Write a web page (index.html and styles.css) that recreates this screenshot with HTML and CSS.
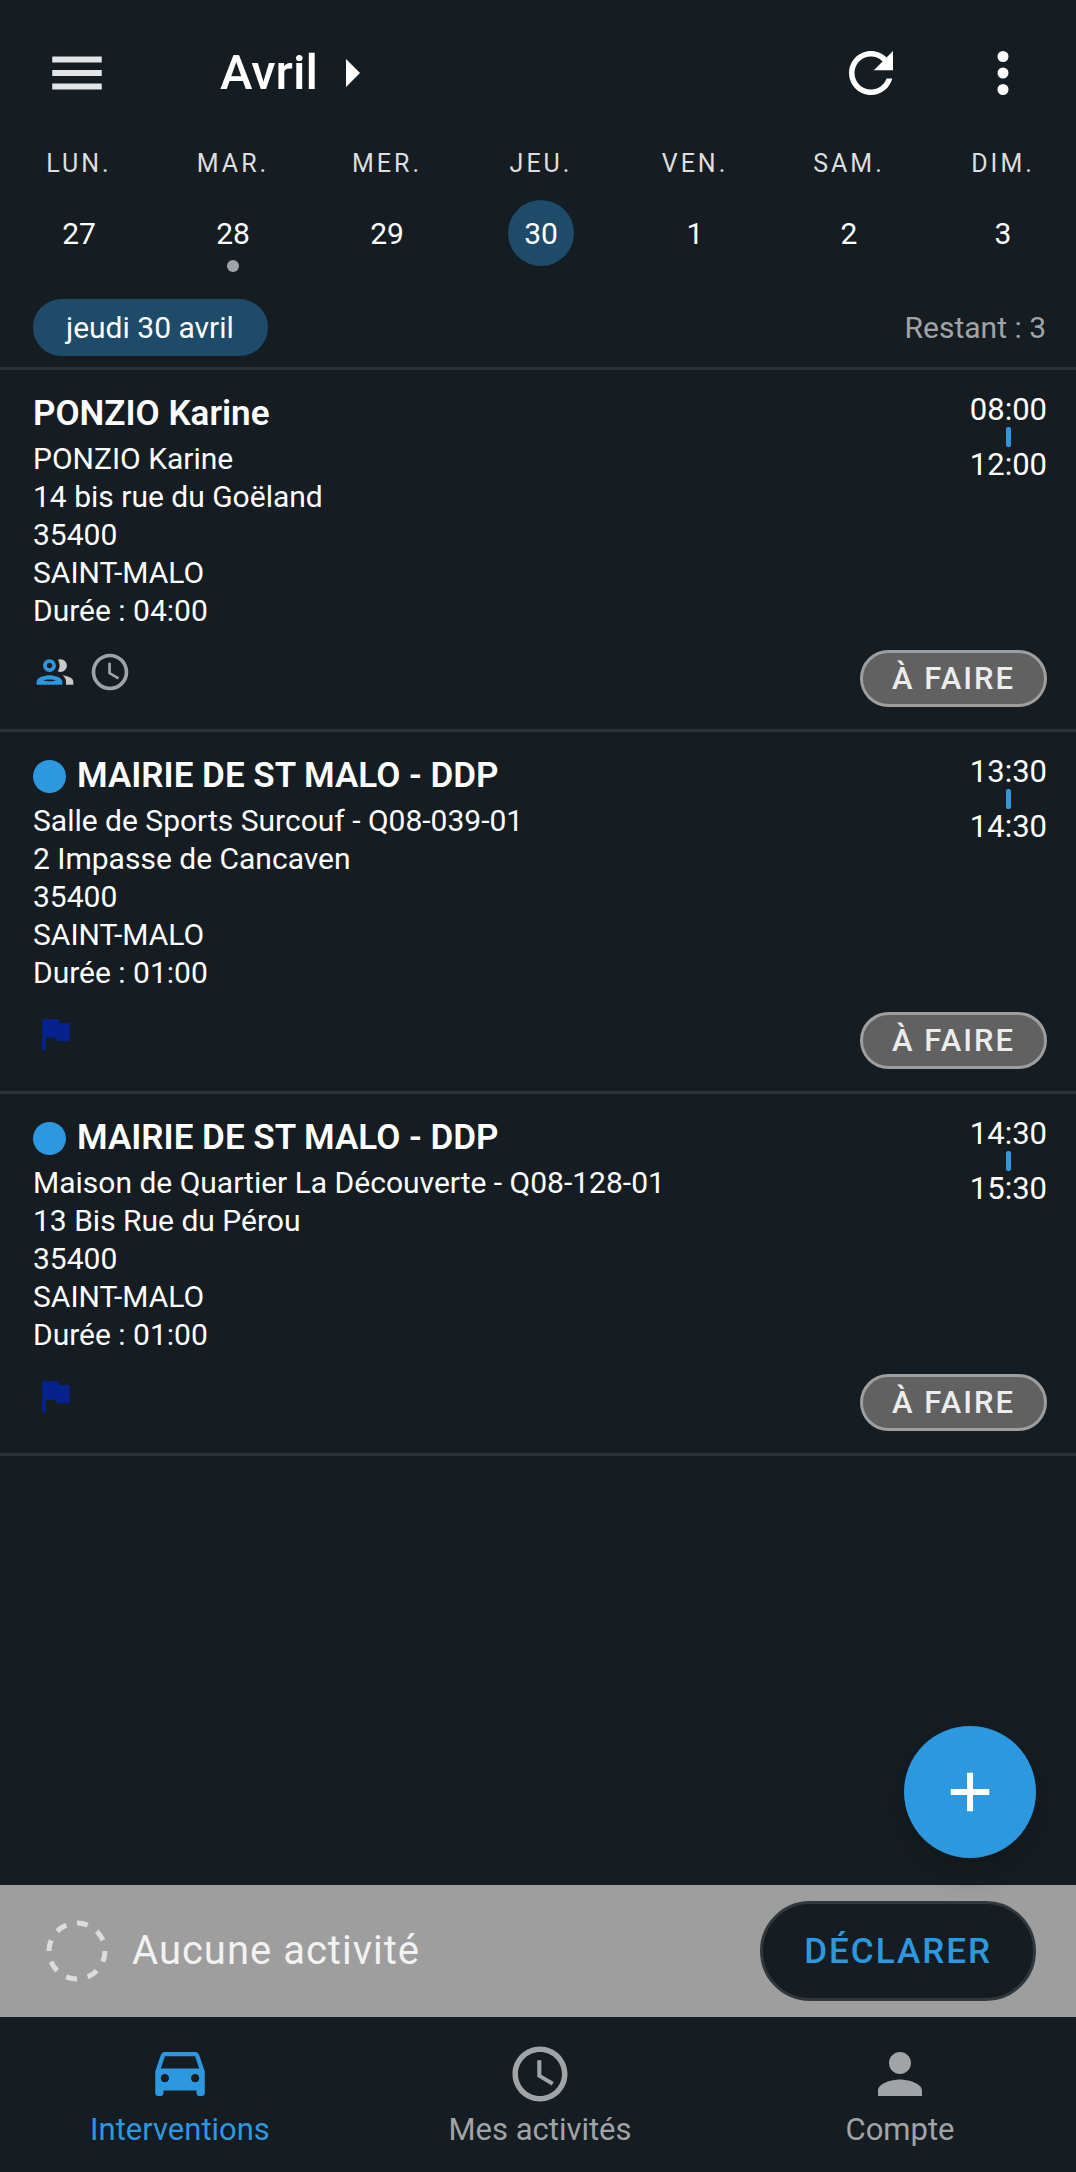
FILE: index.html
```html
<!DOCTYPE html>
<html lang="fr">
<head>
    <meta charset="UTF-8">
    <meta name="viewport" content="width=device-width, initial-scale=1.0">
    <title>Interventions</title>
    <link rel="stylesheet" href="styles.css">
</head>
<body>
    <header class="topbar">
        <button class="icon-button" aria-label="Menu">
            <svg class="icon menu-icon" viewBox="0 0 24 24"><path d="M3 18h18v-2.2H3zm0-4.9h18v-2.2H3zM3 6v2.2h18V6z"/></svg>
        </button>
        <button class="month">
            Avril
            <svg class="month-arrow" viewBox="0 0 5 10"><path d="M0 0l5 5-5 5z"/></svg>
        </button>
        <div class="actions">
            <button class="icon-button" aria-label="Actualiser">
                <svg class="icon" viewBox="0 0 24 24"><path d="M17.65 6.35C16.2 4.9 14.21 4 12 4c-4.42 0-7.99 3.58-7.99 8s3.57 8 7.99 8c3.73 0 6.84-2.55 7.73-6h-2.08c-.82 2.33-3.04 4-5.65 4-3.31 0-6-2.69-6-6s2.69-6 6-6c1.66 0 3.14.69 4.22 1.78L13 11h7V4l-2.35 2.35z"/></svg>
            </button>
            <button class="icon-button" aria-label="Plus d'options">
                <svg class="icon" viewBox="0 0 24 24"><circle cx="12" cy="6" r="2"/><circle cx="12" cy="12" r="2"/><circle cx="12" cy="18" r="2"/></svg>
            </button>
        </div>
    </header>

    <div class="week">
        <div class="day"><span class="day-name">LUN.</span><button class="day-number">27</button></div>
        <div class="day"><span class="day-name">MAR.</span><button class="day-number">28</button><span class="day-dot"></span></div>
        <div class="day"><span class="day-name">MER.</span><button class="day-number">29</button></div>
        <div class="day"><span class="day-name">JEU.</span><button class="day-number selected">30</button></div>
        <div class="day"><span class="day-name">VEN.</span><button class="day-number">1</button></div>
        <div class="day"><span class="day-name">SAM.</span><button class="day-number">2</button></div>
        <div class="day"><span class="day-name">DIM.</span><button class="day-number">3</button></div>
    </div>

    <div class="summary">
        <span class="date-chip">jeudi 30 avril</span>
        <span class="remaining">Restant : 3</span>
    </div>

    <main class="list">
        <article class="item">
            <div class="details">
                <h2>PONZIO Karine</h2>
                <p>PONZIO Karine</p>
                <p>14 bis rue du Goëland</p>
                <p>35400</p>
                <p>SAINT-MALO</p>
                <p>Durée : 04:00</p>
                <div class="tags">
                    <svg class="tag" viewBox="0 0 24 24">
                        <path class="person-front" d="M9 13.75c-2.34 0-7 1.17-7 3.5V19h14v-1.75c0-2.33-4.66-3.5-7-3.5zM5.6 16.6c.9-.4 2-.5 3.4-.5s2.5.1 3.4.5c-.9.3-2 .4-3.4.4s-2.500-.1-3.400-.4zM9 12c1.93 0 3.500-1.570 3.500-3.500S10.930 5 9 5 5.500 6.570 5.500 8.500 7.070 12 9 12zm0-5c.83 0 1.500.67 1.500 1.500S9.830 10 9 10s-1.500-.67-1.500-1.500S8.170 7 9 7z"/>
                        <path class="person-back" d="M16.04 13.81c1.16.84 1.96 1.96 1.96 3.44V19h4v-1.75c0-2.02-3.5-3.17-5.96-3.44zM15 12c1.93 0 3.5-1.57 3.5-3.5S16.93 5 15 5c-.54 0-1.04.13-1.5.35.63.89 1 1.98 1 3.15s-.37 2.26-1 3.15c.46.22.96.35 1.5.35z"/>
                    </svg>
                    <svg class="tag clock" viewBox="0 0 24 24"><path d="M12 2C6.48 2 2 6.48 2 12s4.48 10 10 10 10-4.48 10-10S17.52 2 12 2zm0 18c-4.42 0-8-3.58-8-8s3.58-8 8-8 8 3.58 8 8-3.58 8-8 8zm.5-13H11v6l5.25 3.15.75-1.23-4.5-2.67z"/></svg>
                </div>
            </div>
            <div class="side">
                <div class="times"><time>08:00</time><span class="time-bar"></span><time>12:00</time></div>
                <button class="status">À FAIRE</button>
            </div>
        </article>

        <article class="item">
            <div class="details">
                <h2><span class="bullet"></span>MAIRIE DE ST MALO - DDP</h2>
                <p>Salle de Sports Surcouf - Q08-039-01</p>
                <p>2 Impasse de Cancaven</p>
                <p>35400</p>
                <p>SAINT-MALO</p>
                <p>Durée : 01:00</p>
                <div class="tags">
                    <svg class="tag flag" viewBox="0 0 24 24"><path d="M14.4 6L14 4H5v17h2v-7h5.6l.4 2h7V6z"/></svg>
                </div>
            </div>
            <div class="side">
                <div class="times"><time>13:30</time><span class="time-bar"></span><time>14:30</time></div>
                <button class="status">À FAIRE</button>
            </div>
        </article>

        <article class="item">
            <div class="details">
                <h2><span class="bullet"></span>MAIRIE DE ST MALO - DDP</h2>
                <p>Maison de Quartier La Découverte - Q08-128-01</p>
                <p>13 Bis Rue du Pérou</p>
                <p>35400</p>
                <p>SAINT-MALO</p>
                <p>Durée : 01:00</p>
                <div class="tags">
                    <svg class="tag flag" viewBox="0 0 24 24"><path d="M14.4 6L14 4H5v17h2v-7h5.6l.4 2h7V6z"/></svg>
                </div>
            </div>
            <div class="side">
                <div class="times"><time>14:30</time><span class="time-bar"></span><time>15:30</time></div>
                <button class="status">À FAIRE</button>
            </div>
        </article>
    </main>

    <footer class="bottom">
        <button class="fab" aria-label="Ajouter">
            <svg class="icon" viewBox="0 0 24 24"><path d="M19 13.1h-5.9V19h-2.2v-5.9H5v-2.2h5.9V5h2.2v5.9H19z"/></svg>
        </button>
        <div class="activity">
            <svg class="ring" viewBox="0 0 62 62"><circle cx="31" cy="31" r="28" pathLength="16" transform="rotate(-90 31 31)"/></svg>
            <span class="activity-text">Aucune activité</span>
            <button class="declare">DÉCLARER</button>
        </div>
        <nav class="tabs">
            <a class="tab active" href="#interventions">
                <svg class="icon" viewBox="0 1 24 24"><path d="M18.92 6.01C18.72 5.42 18.16 5 17.5 5h-11c-.66 0-1.21.42-1.42 1.01L3 12v8c0 .55.45 1 1 1h1c.55 0 1-.45 1-1v-1h12v1c0 .55.45 1 1 1h1c.55 0 1-.45 1-1v-8l-2.08-5.99zM6.5 16c-.83 0-1.5-.67-1.5-1.5S5.67 13 6.5 13s1.5.67 1.5 1.5S7.33 16 6.5 16zm11 0c-.83 0-1.5-.67-1.5-1.5s.67-1.5 1.5-1.5 1.5.67 1.5 1.5-.67 1.5-1.5 1.5zM5 11l1.5-4.5h11L19 11H5z"/></svg>
                Interventions
            </a>
            <a class="tab" href="#activites">
                <svg class="icon" viewBox="0 0 24 24"><path d="M12 2C6.48 2 2 6.48 2 12s4.48 10 10 10 10-4.48 10-10S17.52 2 12 2zm0 18c-4.42 0-8-3.58-8-8s3.58-8 8-8 8 3.58 8 8-3.58 8-8 8zm.5-13H11v6l5.25 3.15.75-1.23-4.5-2.67z"/></svg>
                Mes activités
            </a>
            <a class="tab" href="#compte">
                <svg class="icon" viewBox="0 0 24 24"><path d="M12 12c2.21 0 4-1.79 4-4s-1.79-4-4-4-4 1.79-4 4 1.79 4 4 4zm0 2c-2.67 0-8 1.34-8 4v2h16v-2c0-2.66-5.33-4-8-4z"/></svg>
                Compte
            </a>
        </nav>
    </footer>
</body>
</html>
```
FILE: styles.css
```css
* {
    box-sizing: border-box;
}

body {
    display: flex;
    flex-direction: column;
    min-height: 100vh;
    margin: 0;
    overflow-x: hidden;
    font-family: Roboto, sans-serif;
    font-size: 30px;
    line-height: 38px;
    color: #fff;
    background: #151d23;
}

button {
    padding: 0;
    border: 0;
    font: inherit;
    color: inherit;
    background: none;
    cursor: pointer;
}

h2,
p {
    margin: 0;
}

svg {
    display: block;
    fill: currentColor;
}

.icon {
    width: 66px;
    height: 66px;
}

/* header */
.topbar {
    display: flex;
    align-items: center;
    height: 145px;
    padding: 0 40px 0 44px;
}

.menu-icon {
    color: #e2e4e5;
}

.month {
    display: flex;
    align-items: center;
    gap: 28px;
    margin-left: 110px;
    font-size: 49px;
    font-weight: 500;
    line-height: 60px;
}

.month-arrow {
    width: 14px;
    height: 28px;
}

.actions {
    display: flex;
    gap: 66px;
    margin-left: auto;
}

/* week strip */
.week {
    display: grid;
    grid-template-columns: repeat(7, 1fr);
    height: 143px;
    margin: 0 -4px 0 2px;
}

.day {
    display: flex;
    flex-direction: column;
    align-items: center;
}

.day-name {
    font-size: 25px;
    letter-spacing: 3px;
    color: #dcdedf;
}

.day-number {
    width: 66px;
    height: 66px;
    margin-top: 17px;
    padding-top: 2px;
    border-radius: 50%;
}

.day-number.selected {
    background: #1d4b69;
}

.day-dot {
    width: 12px;
    height: 12px;
    margin-top: -6px;
    border-radius: 50%;
    background: #a1a4a7;
}

.summary {
    display: flex;
    align-items: center;
    justify-content: space-between;
    height: 79px;
    padding: 0 30px 0 33px;
}

.date-chip {
    padding: 10px 34px 9px 33px;
    border-radius: 29px;
    background: #1d4b69;
}

.remaining {
    color: #a1a4a7;
}

/* interventions */
.list {
    border-top: 3px solid #2c343a;
}

.item {
    display: flex;
    justify-content: space-between;
    padding: 22px 29px 22px 33px;
    border-bottom: 3px solid #2c343a;
}

.item h2 {
    display: flex;
    align-items: center;
    gap: 11px;
    height: 44px;
    margin-bottom: 4px;
    font-size: 35px;
    font-weight: 600;
}

.bullet {
    width: 33px;
    height: 33px;
    border-radius: 50%;
    background: #2c98df;
}

.tags {
    display: flex;
    gap: 11px;
    margin: 20px 0 13px;
}

.tag {
    width: 44px;
    height: 44px;
}

.person-front {
    fill: #2c98df;
}

.person-back {
    fill: #c9c9c9;
}

.clock {
    color: #a1a4a7;
}

.flag {
    color: #06228f;
}

.side {
    display: flex;
    flex-direction: column;
    align-items: flex-end;
    justify-content: space-between;
}

.times {
    display: flex;
    flex-direction: column;
    align-items: center;
    font-size: 31px;
    line-height: 35px;
}

.time-bar {
    width: 5px;
    height: 20px;
    border-radius: 2px;
    background: #2c98df;
}

.status {
    height: 57px;
    padding: 0 29px;
    border: 3px solid #9e9e9e;
    border-radius: 29px;
    font-size: 31px;
    font-weight: 500;
    letter-spacing: 2px;
    color: #ececec;
    background: #616161;
}

/* bottom area */
.bottom {
    position: relative;
    margin-top: auto;
}

.fab {
    position: absolute;
    right: 40px;
    bottom: calc(100% + 27px);
    display: grid;
    place-items: center;
    width: 132px;
    height: 132px;
    border-radius: 50%;
    background: #2c98df;
    box-shadow: 0 12px 24px rgba(20, 20, 16, 0.6);
}

.activity {
    display: flex;
    align-items: center;
    height: 132px;
    padding: 0 40px 0 46px;
    background: #9e9e9e;
}

.ring {
    width: 62px;
    height: 62px;
    fill: none;
    stroke: #dcdcdc;
    stroke-width: 5;
    stroke-dasharray: 1;
}

.activity-text {
    margin-left: 24px;
    font-size: 40px;
    letter-spacing: 1px;
    color: #f2f2f2;
}

.declare {
    height: 100px;
    margin-left: auto;
    padding: 2px 41px 0;
    border: 3px solid #30383d;
    border-radius: 50px;
    font-size: 35px;
    font-weight: 500;
    letter-spacing: 2px;
    color: #2c98df;
    background: #151d23;
}

.tabs {
    display: grid;
    grid-template-columns: repeat(3, 1fr);
    height: 155px;
    margin-right: -4px;
}

.tab {
    display: flex;
    flex-direction: column;
    align-items: center;
    gap: 4px;
    padding-top: 24px;
    font-size: 31px;
    color: #a1a4a7;
    text-decoration: none;
}

.tab.active {
    color: #2c98df;
}
```
